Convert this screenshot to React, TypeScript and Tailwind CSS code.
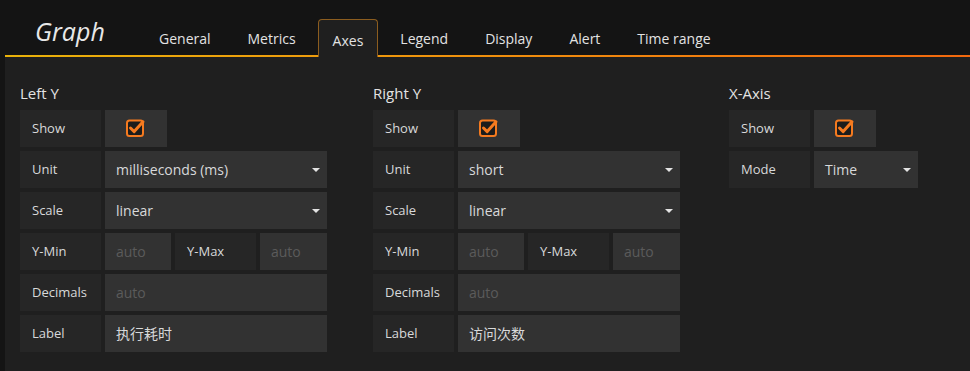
const tabs = ['General', 'Metrics', 'Axes', 'Legend', 'Display', 'Alert', 'Time range'];

function Check() {
  return (
    <svg width="20" height="19" viewBox="0 0 20 19">
      <rect x="1" y="2.5" width="16" height="15.5" rx="2.5" fill="#1c1c1c" stroke="#f57a1f" strokeWidth="2" />
      <path d="M4.5 10 L8.2 13.6 L17 3.8" fill="none" stroke="#f57a1f" strokeWidth="3" strokeLinecap="round" strokeLinejoin="round" />
    </svg>
  );
}

function Label({ text, w = 'w-[81px]' }: { text: string; w?: string }) {
  return (
    <div className={`${w} h-full bg-[#262626] flex items-center pl-[12px] text-[13px] text-[#d8d9da] shrink-0`}>
      {text}
    </div>
  );
}

function Select({ value, w }: { value: string; w: string }) {
  return (
    <div className={`${w} h-full bg-[#323232] flex items-center justify-between pl-[11px] pr-[7px] text-[14px] text-[#d8d9da] shrink-0`}>
      <span>{value}</span>
      <span className="w-0 h-0 border-l-[4px] border-r-[4px] border-t-[4px] border-l-transparent border-r-transparent border-t-[#e3e3e3]" />
    </div>
  );
}

function Input({ value, w, placeholder }: { value?: string; w: string; placeholder?: string }) {
  return (
    <div className={`${w} h-full bg-[#323232] flex items-center pl-[11px] text-[14px] shrink-0`}>
      {value ? (
        <span className="text-[#d8d9da]">{value}</span>
      ) : (
        <span className="text-[#5b5b5b]">{placeholder}</span>
      )}
    </div>
  );
}

function ShowRow() {
  return (
    <div className="flex h-[37px] gap-1">
      <Label text="Show" />
      <div className="w-[62px] h-full bg-[#323232] flex items-center justify-center pb-[2px]">
        <Check />
      </div>
    </div>
  );
}

function YAxis({ title, unit, label }: { title: string; unit: string; label: string }) {
  return (
    <div className="w-[307px] shrink-0">
      <div className="text-[15px] leading-[20px] text-[#e3e3e3] mb-[7px]">{title}</div>
      <div className="flex flex-col gap-1">
        <ShowRow />
        <div className="flex h-[37px] gap-1">
          <Label text="Unit" />
          <Select value={unit} w="w-[222px]" />
        </div>
        <div className="flex h-[37px] gap-1">
          <Label text="Scale" />
          <Select value="linear" w="w-[222px]" />
        </div>
        <div className="flex h-[37px] gap-1">
          <Label text="Y-Min" />
          <Input w="w-[66px]" placeholder="auto" />
          <Label text="Y-Max" />
          <Input w="w-[67px]" placeholder="auto" />
        </div>
        <div className="flex h-[37px] gap-1">
          <Label text="Decimals" />
          <Input w="w-[222px]" placeholder="auto" />
        </div>
        <div className="flex h-[37px] gap-1">
          <Label text="Label" />
          <Input w="w-[222px]" value={label} />
        </div>
      </div>
    </div>
  );
}

export default function App() {
  return (
    <div className="w-[970px] h-[371px] bg-[#141414] overflow-hidden font-['Open_Sans','Noto_Sans_CJK_SC',sans-serif]">
      {/* header */}
      <div className="relative h-[57px] ml-[5px] flex items-end pl-[30px]">
        <div className="absolute left-0 right-0 bottom-0 h-[2px] bg-gradient-to-r from-[#e9b20a] to-[#f2680e]" />
        <div className="w-[109px] self-start pt-[14px] text-[25px] italic text-[#e8e8e8] leading-[34px]">Graph</div>
        <div className="flex gap-[7px] h-full items-end">
          {tabs.map((t) =>
            t === 'Axes' ? (
              <div
                key={t}
                className="relative z-10 h-[38px] px-[14px] border border-b-0 border-[#8c5d1f] rounded-t-[4px] bg-[#1f1f1f] text-[14px] text-[#e3e3e3] flex items-center pt-[4px]"
              >
                {t}
              </div>
            ) : (
              <div key={t} className="h-[38px] px-[15px] text-[14px] text-[#e3e3e3] flex items-center pt-[1px]">
                {t}
              </div>
            )
          )}
        </div>
      </div>

      {/* body */}
      <div className="ml-[5px] h-[314px] bg-[#1f1f1f] pt-[26px] pl-[15px] flex">
        <div className="mr-[46px]">
          <YAxis title="Left Y" unit="milliseconds (ms)" label="执行耗时" />
        </div>
        <div className="mr-[49px]">
          <YAxis title="Right Y" unit="short" label="访问次数" />
        </div>
        <div>
          <div className="text-[15px] leading-[20px] text-[#e3e3e3] mb-[7px]">X-Axis</div>
          <div className="flex flex-col gap-1">
            <ShowRow />
            <div className="flex h-[37px] gap-1">
              <Label text="Mode" />
              <Select value="Time" w="w-[104px]" />
            </div>
          </div>
        </div>
      </div>
    </div>
  );
}
